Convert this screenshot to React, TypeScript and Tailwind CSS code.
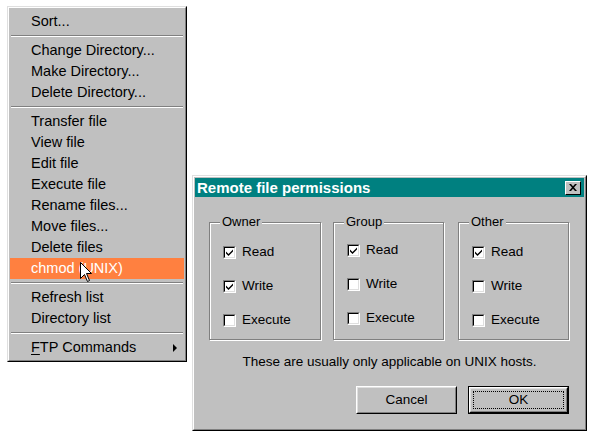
import React from 'react';

const font = { fontFamily: '"Liberation Sans", Arial, sans-serif' };

type Item = { label: React.ReactNode; active?: boolean; sub?: boolean } | 'sep';

const items: Item[] = [
  { label: 'Sort...' },
  'sep',
  { label: 'Change Directory...' },
  { label: 'Make Directory...' },
  { label: 'Delete Directory...' },
  'sep',
  { label: 'Transfer file' },
  { label: 'View file' },
  { label: 'Edit file' },
  { label: 'Execute file' },
  { label: 'Rename files...' },
  { label: 'Move files...' },
  { label: 'Delete files' },
  { label: 'chmod (UNIX)', active: true },
  'sep',
  { label: 'Refresh list' },
  { label: 'Directory list' },
  'sep',
  {
    label: (
      <>
        <span className="underline underline-offset-2">F</span>TP Commands
      </>
    ),
    sub: true,
  },
];

function ContextMenu() {
  return (
    <div className="absolute left-[7px] top-[6px] w-[180px] h-[356px] border border-t-[#dfdfdf] border-l-[#dfdfdf] border-r-black border-b-black bg-[#c0c0c0]">
      <div className="h-full border border-t-white border-l-white border-r-[#808080] border-b-[#808080] px-[1px] pt-[3px]">
        {items.map((it, i) =>
          it === 'sep' ? (
            <div key={i} className="my-[3px] mx-[1px] border-t border-t-[#808080] border-b border-b-white" />
          ) : (
            <div
              key={i}
              className={
                'h-[21px] flex items-center pl-[21px] pr-[6px] text-[14.5px] ' +
                (it.active ? 'bg-[#ff8040] text-white' : 'text-black')
              }
            >
              <span>{it.label}</span>
              {it.sub && (
                <svg className="ml-auto" width="5" height="8" viewBox="0 0 5 8">
                  <path d="M0 0 L4 4 L0 8 Z" fill="#000" />
                </svg>
              )}
            </div>
          ),
        )}
      </div>
    </div>
  );
}

function Cursor() {
  return (
    <svg className="absolute left-[80px] top-[262px]" width="13" height="21" viewBox="0 0 13 21">
      <path
        d="M0.5 0.5 L0.5 16.5 L4.5 12.5 L7.5 19.5 L9.5 18.5 L6.5 11.5 L11.5 11.5 Z"
        fill="#fff"
        stroke="#000"
        strokeWidth="1"
      />
    </svg>
  );
}

function Checkbox({ checked, label }: { checked: boolean; label: string }) {
  return (
    <div className="h-[18px] flex items-center gap-[6px]">
      <div className="w-[13px] h-[13px] border border-t-[#808080] border-l-[#808080] border-r-white border-b-white">
        <div className="w-full h-full border border-t-black border-l-black border-r-[#dfdfdf] border-b-[#dfdfdf] bg-white flex items-center justify-center">
          {checked && (
            <svg width="9" height="9" viewBox="0 0 9 9">
              <path d="M1 3.5 L3.5 6 L8 1.5 L8 3.5 L3.5 8 L1 5.5 Z" fill="#000" />
            </svg>
          )}
        </div>
      </div>
      <span className="text-[13.5px] leading-[16px] text-black">{label}</span>
    </div>
  );
}

function GroupBox({
  title,
  width,
  checks,
  pad,
}: {
  title: string;
  width: string;
  checks: boolean[];
  pad: string;
}) {
  return (
    <div
      className={
        'relative h-[118px] border border-[#808080] shadow-[1px_1px_0_#fff,inset_1px_1px_0_#fff] pl-[13px] flex flex-col gap-[16px] ' +
        width +
        ' ' +
        pad
      }
    >
      <span className="absolute -top-[9px] left-[10px] bg-[#c0c0c0] px-[2px] text-[13px] leading-[16px] text-black">
        {title}
      </span>
      <Checkbox checked={checks[0]} label="Read" />
      <Checkbox checked={checks[1]} label="Write" />
      <Checkbox checked={checks[2]} label="Execute" />
    </div>
  );
}

function Button({ label, isDefault }: { label: string; isDefault?: boolean }) {
  const face = (
    <div className="w-full h-full border border-t-white border-l-white border-r-black border-b-black">
      <div className="w-full h-full border border-t-[#dfdfdf] border-l-[#dfdfdf] border-r-[#808080] border-b-[#808080] p-[2px]">
        <div
          className={
            'w-full h-full flex items-center justify-center text-[13.5px] text-black ' +
            (isDefault ? 'border border-dotted border-black' : '')
          }
        >
          {label}
        </div>
      </div>
    </div>
  );
  return (
    <div className={'w-[101px] h-[28px] bg-[#c0c0c0] ' + (isDefault ? 'border border-black' : '')}>
      {face}
    </div>
  );
}

function PermissionsDialog() {
  return (
    <div className="absolute left-[192px] top-[175px] w-[395px] h-[256px] border border-t-[#dfdfdf] border-l-[#dfdfdf] border-r-black border-b-black bg-[#c0c0c0]">
      <div className="h-full border border-t-white border-l-white border-r-[#808080] border-b-[#808080] p-[1px] flex flex-col">
        {/* title bar */}
        <div className="h-[19px] bg-[#008080] flex items-center pl-[2px] pr-[3px]">
          <span className="text-white font-bold text-[15px] leading-[18px]">Remote file permissions</span>
          <div className="ml-auto w-[16px] h-[14px] bg-[#c0c0c0] border border-t-white border-l-white border-r-black border-b-black flex items-center justify-center">
            <svg width="8" height="7" viewBox="0 0 8 7">
              <path d="M0 0 L2 0 L4 2.2 L6 0 L8 0 L5 3.5 L8 7 L6 7 L4 4.8 L2 7 L0 7 L3 3.5 Z" fill="#000" />
            </svg>
          </div>
        </div>

        {/* group boxes */}
        <div className="flex pl-[14px] mt-[25px]">
          <GroupBox title="Owner" width="w-[112px]" checks={[true, true, false]} pad="pt-[20px]" />
          <div className="w-[12px]" />
          <GroupBox title="Group" width="w-[111px]" checks={[true, false, false]} pad="pt-[18px]" />
          <div className="w-[14px]" />
          <GroupBox title="Other" width="w-[111px]" checks={[true, false, false]} pad="pt-[20px]" />
        </div>

        <div className="mt-[14px] text-center text-[13.5px] leading-[16px] text-black">
          These are usually only applicable on UNIX hosts.
        </div>

        <div className="mt-[16px] flex justify-end gap-[11px] pr-[15px]">
          <Button label="Cancel" />
          <Button label="OK" isDefault />
        </div>
      </div>
    </div>
  );
}

export default function App() {
  return (
    <div className="relative w-[591px] h-[434px] bg-white overflow-hidden" style={font}>
      <ContextMenu />
      <PermissionsDialog />
      <Cursor />
    </div>
  );
}
